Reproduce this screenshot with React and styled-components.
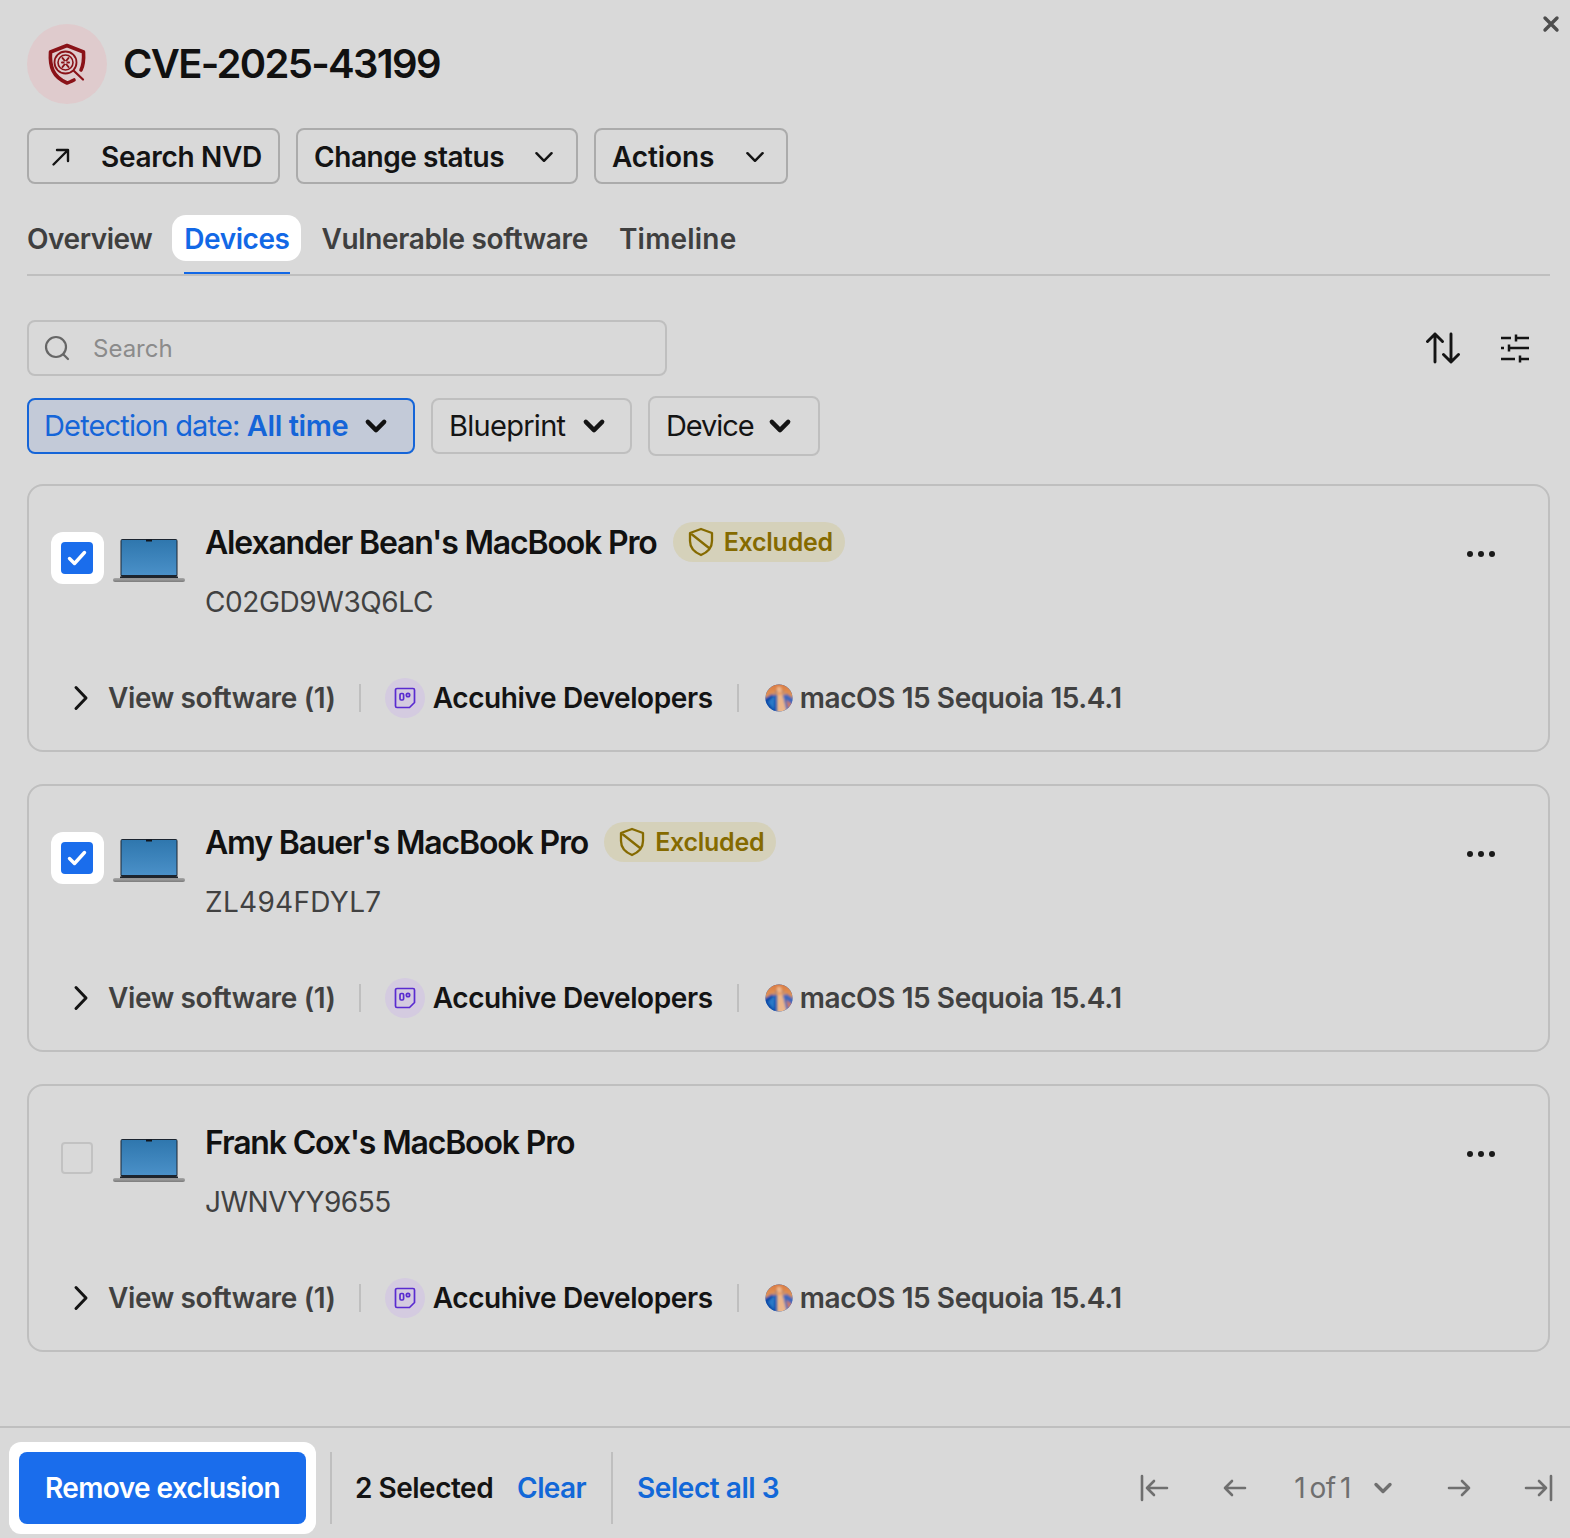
import React from "react";
import styled, { createGlobalStyle } from "styled-components";

const Global = createGlobalStyle`
  html, body { margin: 0; padding: 0; background: #d9d9d9; }
  * { box-sizing: border-box; }
  body { font-family: Inter, "Liberation Sans", sans-serif; color: #111; }
`;
const Page = styled.div`
  position: relative; width: 1570px; height: 1538px; display: flex; flex-direction: column; background: #d9d9d9;
`;
const Main = styled.div`flex: 1; padding: 24px 20px 0 27px;`;
const CloseBtn = styled.div`position: absolute; top: 15px; right: 10px; width: 18px; height: 18px; color: #4d4d4d;`;
const Header = styled.div`display: flex; align-items: center; gap: 16px; height: 80px;`;
const IconCircle = styled.div`
  width: 80px; height: 80px; border-radius: 50%; background: #dfcbcd; display: flex; align-items: center; justify-content: center;
`;
const Title = styled.h1`margin: 0 0 2px; font-size: 40px; font-weight: 600; letter-spacing: -1.7px; color: #111;`;
const Actions = styled.div`display: flex; gap: 16px; margin-top: 24px;`;
const ActionBtn = styled.div`
  height: 56px; width: ${p => p.$w}px; border: 2px solid #ababab; border-radius: 8px; display: flex; align-items: center;
  justify-content: space-between; padding: 1px ${p => p.$pr}px 0 ${p => p.$pl}px; font-size: 28px; font-weight: 600; letter-spacing: ${p => p.$ls}px; color: #141414;
`;
const Tabs = styled.div`
  display: flex; align-items: flex-start; margin-top: 31px; height: 61px; border-bottom: 2px solid #bfbfbf; width: 1523px;
`;
const Tab = styled.div`
  position: relative; height: 46px; display: flex; align-items: center; padding: 1px 12px 0; border-radius: 14px; font-size: 28px; font-weight: 600;
  letter-spacing: ${p => p.$ls}px;
  margin-right: ${p => p.$mr}px; margin-left: ${p => p.$ml || 0}px;
  color: ${p => p.$active ? "#1268e6" : "#3f3f3f"}; background: ${p => p.$active ? "#fff" : "transparent"};
`;
const TabLine = styled.span`
  position: absolute; left: 12px; right: 11px; top: 57px; height: 2px; background: #1268e6;
`;
const Toolbar = styled.div`display: flex; justify-content: space-between; align-items: center; margin-top: 44px; padding-right: 21px;`;
const SearchBox = styled.div`
  width: 640px; height: 56px; border: 2px solid #bfbfbf; border-radius: 8px; display: flex; align-items: center; gap: 22px; padding-left: 14px;
  font-size: 24px; color: #8b8b8b;
`;
const ToolIcons = styled.div`display: flex; align-items: center; gap: 41px;`;
const Filters = styled.div`display: flex; align-items: center; gap: 16px; margin-top: 20px;`;
const Filter = styled.div`
  width: ${p => p.$w}px; height: ${p => p.$h || 56}px; border-radius: 8px; border: 2px solid ${p => p.$active ? "#1565d8" : "#bfbfbf"};
  background: ${p => p.$active ? "#c3cad8" : "transparent"}; color: ${p => p.$active ? "#1565d8" : "#141414"};
  display: flex; align-items: center; justify-content: space-between; padding: 0 ${p => p.$pr}px 1px ${p => p.$pl || 16}px; font-size: 29px; letter-spacing: ${p => p.$ls || -0.72}px;
  b { font-weight: 600; letter-spacing: -0.4px; }
`;
const Cards = styled.div`display: flex; flex-direction: column; gap: 32px; margin-top: 28px;`;
const Card = styled.div`
  width: 1523px; height: 268px; border: 2px solid #bfbfbf; border-radius: 16px; padding: 36px 0 0 22px; position: relative;
`;
const Top = styled.div`display: flex; align-items: flex-start;`;
const CheckWrap = styled.div`
  width: 53px; height: 52px; margin-top: 10px; padding-right: 1px; border-radius: 12px; background: ${p => p.$on ? "#fff" : "transparent"}; display: flex; align-items: center; justify-content: center;
`;
const Check = styled.div`
  width: 32px; height: 32px; border-radius: 4px; display: flex; align-items: center; justify-content: center;
  background: ${p => p.$on ? "#1a6dec" : "transparent"}; border: ${p => p.$on ? "none" : "2px solid #c2c2c2"};
`;
const Laptop = styled.div`margin: 16px 20px 0 9px; width: 72px; height: 46px;`;
const Info = styled.div`display: flex; flex-direction: column;`;
const NameRow = styled.div`display: flex; align-items: center; gap: 16px; height: 40px;`;
const Name = styled.div`font-size: 32px; font-weight: 600; letter-spacing: -1.17px; color: #111;`;
const Badge = styled.div`
  height: 40px; padding: 0 12px 0 15px; border-radius: 20px; background: #d5d1ba; color: #856a00; font-size: 25px; font-weight: 600; letter-spacing: -0.25px;
  display: flex; align-items: center; gap: 10px;
`;
const Serial = styled.div`font-size: 28px; color: #414141; margin-top: 23px; line-height: 34px; letter-spacing: ${p => p.$ls}px;`;
const Dots = styled.div`
  position: absolute; top: 65px; right: 53px; display: flex; gap: 5px;
  span { width: 6px; height: 6px; border-radius: 50%; background: #1a1a1a; }
`;
const Meta = styled.div`display: flex; align-items: center; height: 40px; margin-top: 59px; font-size: 28px; font-weight: 600;`;
const Chevron = styled.div`width: 20px; margin-left: 20px; margin-right: 17px; display: flex;`;
const Soft = styled.div`color: #414141; letter-spacing: -0.36px;`;
const Sep = styled.div`width: 2px; height: 28px; background: #bfbfbf; margin: ${p => p.$m};`;
const OrgCircle = styled.div`width: 40px; height: 40px; border-radius: 50%; background: #d4cbe0; display: flex; align-items: center; justify-content: center; margin-right: 8px;`;
const Org = styled.div`color: #141414; letter-spacing: -0.38px;`;
const OS = styled.div`color: #414141; letter-spacing: -0.42px; margin-left: 7px;`;
const Footer = styled.div`
  height: 112px; border-top: 2px solid #bfbfbf; display: flex; align-items: center; padding: 10px 16px 0 9px;
`;
const Halo = styled.div`padding: 10px; background: #fff; border-radius: 12px;`;
const Primary = styled.div`
  width: 287px; height: 72px; background: #1a6dec; color: #fff; border-radius: 8px; display: flex; align-items: center; justify-content: center;
  font-size: 28px; font-weight: 600; letter-spacing: -0.6px;
`;
const FootSep = styled.div`width: 2px; height: 72px; background: #bfbfbf; margin: ${p => p.$m};`;
const Selected = styled.div`font-size: 28px; font-weight: 600; letter-spacing: -0.5px; color: #141414;`;
const LinkText = styled.div`font-size: 28px; font-weight: 600; letter-spacing: ${p => p.$ls}px; color: #1268d8; margin-left: ${p => p.$ml || 0}px;`;
const Pager = styled.div`margin-left: auto; display: flex; align-items: center; color: #6f6f6f;`;
const PageLabel = styled.div`font-size: 28px; letter-spacing: -0.5px; word-spacing: -3px; margin: 0 20px 0 44px;`;
const PagerIcon = styled.div`display: flex; margin-left: ${p => p.$ml || 0}px;`;

const Chev = ({ size = 24, w = 3, color = "currentColor" }) => (
  <svg width={size} height={size} viewBox="0 0 24 24" fill="none" stroke={color} strokeWidth={w} strokeLinecap="round" strokeLinejoin="round"><path d="M5 8.500l7 7 7-7" /></svg>
);
const ShieldIcon = () => (
  <svg width="40" height="42" viewBox="0 0 40 42" fill="none" stroke="#8a1218">
    <path d="M27 37 C25 38 22 39.500 20 40 C6 34 2.500 24 3.500 9 L20 2.500 L36.500 9 C37 17 36.500 22 34 27" strokeWidth="3.600" strokeLinejoin="round" strokeLinecap="round" />
    <circle cx="18.500" cy="19.500" r="11" strokeWidth="1.800" />
    <circle cx="18.500" cy="19.500" r="7.500" strokeWidth="1.600" />
    <path d="M27 28 L36 36.500" strokeWidth="2.200" strokeLinecap="round" />
    <path d="M15.500 15l2 2.500M21.500 15l-2 2.500M15.500 24l2-2.500M21.500 24l-2-2.500M15 19.500h1.500M20.500 19.500h1.500" strokeWidth="2" strokeLinecap="round" />
  </svg>
);
const LaptopIcon = () => (
  <svg width="72" height="46" viewBox="0 0 72 46">
    <defs>
      <linearGradient id="scr" x1="0" y1="0" x2="0" y2="1"><stop offset="0" stopColor="#2f77ae" /><stop offset="1" stopColor="#4a90c8" /></linearGradient>
      <linearGradient id="base" x1="0" y1="0" x2="0" y2="1"><stop offset="0" stopColor="#a8a8a8" /><stop offset="1" stopColor="#7c7c7c" /></linearGradient>
    </defs>
    <rect x="7.500" y="1" width="57" height="38" rx="2" fill="#1c2530" />
    <rect x="8.500" y="2" width="55" height="35" fill="url(#scr)" />
    <rect x="33" y="1.500" width="6" height="2" fill="#10151c" />
    <rect x="0" y="40" width="72" height="4" rx="2" fill="url(#base)" />
    <rect x="7" y="38.500" width="58" height="1.600" fill="#20252b" />
  </svg>
);
const ExcludedShield = () => (
  <svg width="26" height="30" viewBox="0 0 26 30" fill="none" stroke="#856a00" strokeWidth="2.300" strokeLinejoin="round" strokeLinecap="round">
    <path d="M13 2 L24 6 V14 C24 21 19 25.500 13 28 C7 25.500 2 21 2 14 V6 Z" />
    <path d="M4 7.500 L21 21" />
  </svg>
);
const OrgIcon = () => (
  <svg width="22" height="22" viewBox="0 0 22 22" fill="none" stroke="#5a2bd0" strokeWidth="1.700" strokeLinejoin="round">
    <path d="M3 1.500 H19 A1.500 1.500 0 0 1 20.500 3 V15.500 L15.500 20.500 H3 A1.500 1.500 0 0 1 1.500 19 V3 A1.500 1.500 0 0 1 3 1.500 Z" />
    <rect x="6" y="6.500" width="3.600" height="6.500" rx="1.200" />
    <circle cx="14" cy="8" r="1.700" />
  </svg>
);
const Sequoia = ({ id }) => (
  <svg width="28" height="28" viewBox="0 0 28 28">
    <defs>
      <clipPath id={id}><circle cx="14" cy="14" r="13.500" /></clipPath>
      <linearGradient id={id + "g"} x1="0" y1="0" x2="0" y2="1"><stop offset="0" stopColor="#d9793f" /><stop offset="1" stopColor="#e39a5f" /></linearGradient>
      <filter id={id + "b"}><feGaussianBlur stdDeviation="0.9" /></filter>
    </defs>
    <g clipPath={`url(#${id})`}>
      <rect width="28" height="28" fill="#1a56b4" />
      <g filter={`url(#${id}b)`}>
        <path d="M-1 -1 H29 V15 L17 7 H12 L-1 15 Z" fill={`url(#${id}g)`} />
        <path d="M-1 15 L11 8 L10 29 H-1 Z" fill="#0e49a8" />
        <path d="M3 18 L10 11 L9 26 Z" fill="#2a7ac8" />
        <path d="M18 8 L29 16 V29 H21 Z" fill="#3f68bc" />
        <path d="M21 16 L27 20 L24 27 Z" fill="#cf7c5e" />
        <path d="M12 3 H16 L22 29 H12 Z" fill="#edb68a" />
        <path d="M7 8 L21 8 L21 11 L7 11 Z" fill="#e89a5e" opacity="0.8" />
      </g>
    </g>
  </svg>
);
const PArrow = ({ d }) => (
  <svg width="32" height="32" viewBox="0 0 32 32" fill="none" stroke="#6f6f6f" strokeWidth="2.600" strokeLinecap="round" strokeLinejoin="round"><path d={d} /></svg>
);

const devices = [
  { name: "Alexander Bean's MacBook Pro", serial: "C02GD9W3Q6LC", on: true, ls: -0.4 },
  { name: "Amy Bauer's MacBook Pro", serial: "ZL494FDYL7", on: true, ls: 0.3 },
  { name: "Frank Cox's MacBook Pro", serial: "JWNVYY9655", on: false, ls: -0.5 },
];

export default function App() {
  return (
    <Page>
      <Global />
      <CloseBtn>
        <svg width="18" height="18" viewBox="0 0 18 18" stroke="currentColor" strokeWidth="3.400" strokeLinecap="round"><path d="M3 3l12 12M15 3L3 15" /></svg>
      </CloseBtn>
      <Main>
        <Header>
          <IconCircle><ShieldIcon /></IconCircle>
          <Title>CVE-2025-43199</Title>
        </Header>
        <Actions>
          <ActionBtn $w={253} $pl={21} $pr={16} $ls={-0.3}>
            <svg width="22" height="22" viewBox="0 0 22 22" fill="none" stroke="#141414" strokeWidth="2.400" strokeLinecap="round" strokeLinejoin="round"><path d="M3.500 18.500L18 4M7 4h11v11" /></svg>
            <span>Search NVD</span>
          </ActionBtn>
          <ActionBtn $w={282} $pl={16} $pr={19} $ls={-0.45}>
            <span>Change status</span><Chev size={26} w={2.300} />
          </ActionBtn>
          <ActionBtn $w={194} $pl={16} $pr={18} $ls={-0.1}>
            <span>Actions</span><Chev size={26} w={2.300} />
          </ActionBtn>
        </Actions>
        <Tabs>
          <Tab $ml={-12} $mr={8} $ls={-0.45}>Overview</Tab>
          <Tab $active $mr={8} $ls={-0.45}>Devices<TabLine /></Tab>
          <Tab $mr={7} $ls={-0.35}>Vulnerable software</Tab>
          <Tab $mr={0} $ls={0.2}>Timeline</Tab>
        </Tabs>
        <Toolbar>
          <SearchBox>
            <svg width="28" height="28" viewBox="0 0 28 28" fill="none" stroke="#666" strokeWidth="2.200" strokeLinecap="round"><circle cx="13" cy="13" r="10" /><path d="M20.500 20.500L25 25" /></svg>
            <span>Search</span>
          </SearchBox>
          <ToolIcons>
            <svg width="34" height="34" viewBox="0 0 34 34" fill="none" stroke="#141414" strokeWidth="2.900" strokeLinecap="round" strokeLinejoin="round"><path d="M9 31V3M1.500 10.500L9 3l7.500 7.500M25 3v28M17.500 23.500L25 31l7.500-7.500" /></svg>
            <svg width="28" height="30" viewBox="0 0 28 30" fill="none" stroke="#141414" strokeWidth="2.500" strokeLinecap="butt"><path d="M0 5h10M15 5h13M15 1.500v7M0 15h3M8 15h20M8 11.500v7M0 26h14M19 26h9M19 22.500v7" /></svg>
          </ToolIcons>
        </Toolbar>
        <Filters>
          <Filter $active $w={388} $pr={23} $pl={15} $ls={-0.85}>
            <span>Detection date: <b>All time</b></span><Chev size={28} w={3.800} color="#111" />
          </Filter>
          <Filter $w={201} $pr={22}>
            <span>Blueprint</span><Chev size={28} w={3.800} />
          </Filter>
          <Filter $w={172} $h={60} $pr={24} $ls={-1.1}>
            <span>Device</span><Chev size={28} w={3.800} />
          </Filter>
        </Filters>
        <Cards>
          {devices.map((d, i) => (
            <Card key={d.serial}>
              <Top>
                <CheckWrap $on={d.on}>
                  <Check $on={d.on}>
                    {d.on && <svg width="20" height="16" viewBox="0 0 20 16" fill="none" stroke="#fff" strokeWidth="3.400" strokeLinecap="round" strokeLinejoin="round"><path d="M2.500 8.500L7.500 13.500L17.500 2.500" /></svg>}
                  </Check>
                </CheckWrap>
                <Laptop><LaptopIcon /></Laptop>
                <Info>
                  <NameRow>
                    <Name>{d.name}</Name>
                    {d.on && <Badge><ExcludedShield />Excluded</Badge>}
                  </NameRow>
                  <Serial $ls={d.ls}>{d.serial}</Serial>
                </Info>
              </Top>
              <Dots><span /><span /><span /></Dots>
              <Meta>
                <Chevron>
                  <svg width="20" height="28" viewBox="0 0 20 28" fill="none" stroke="#141414" strokeWidth="3" strokeLinecap="round" strokeLinejoin="round"><path d="M5 3.500L15 14L5 24.500" /></svg>
                </Chevron>
                <Soft>View software (1)</Soft>
                <Sep $m="0 24px 0 23px" />
                <OrgCircle><OrgIcon /></OrgCircle>
                <Org>Accuhive Developers</Org>
                <Sep $m="0 26px 0 24px" />
                <Sequoia id={"seq" + i} />
                <OS>macOS 15 Sequoia 15.4.1</OS>
              </Meta>
            </Card>
          ))}
        </Cards>
      </Main>
      <Footer>
        <Halo><Primary>Remove exclusion</Primary></Halo>
        <FootSep $m="0 23px 0 14px" />
        <Selected>2 Selected</Selected>
        <LinkText $ml={24} $ls={-0.6}>Clear</LinkText>
        <FootSep $m="0 24px 0 25px" />
        <LinkText $ls={-0.45}>Select all 3</LinkText>
        <Pager>
          <PArrow d="M3 4v24M28 16H8M15 9l-7 7 7 7" />
          <PagerIcon $ml={47}><PArrow d="M27 16H7M14 9l-7 7 7 7" /></PagerIcon>
          <PageLabel>1 of 1</PageLabel>
          <Chev size={24} w={3.400} />
          <PagerIcon $ml={49}><PArrow d="M5 16h20M18 9l7 7-7 7" /></PagerIcon>
          <PagerIcon $ml={46}><PArrow d="M4 16h20M17 9l7 7-7 7M29 4v24" /></PagerIcon>
        </Pager>
      </Footer>
    </Page>
  );
}
